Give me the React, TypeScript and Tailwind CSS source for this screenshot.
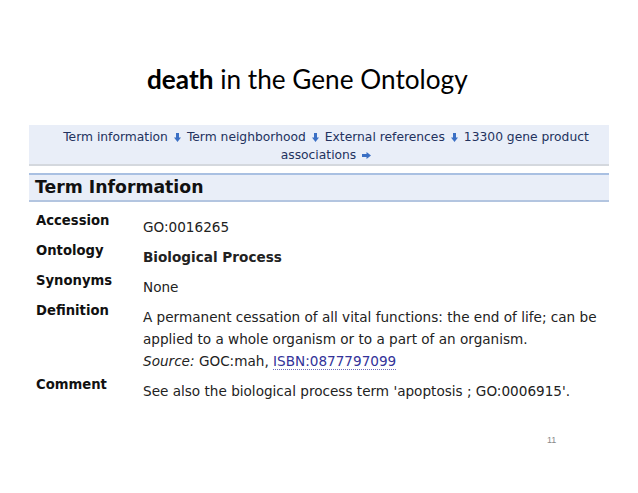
const Down = () => (
  <svg width="7" height="9" viewBox="0 0 7 9" className="mx-[6px] inline-block align-[-1px]">
    <rect x="2" y="0" width="3" height="5" fill="#3a6fc4" />
    <polygon points="0,4.5 7,4.5 3.5,9" fill="#3a6fc4" />
  </svg>
)

const Right = () => (
  <svg width="9" height="7" viewBox="0 0 9 7" className="ml-[6px] inline-block align-[0px]">
    <rect x="0" y="2" width="5" height="3" fill="#3a6fc4" />
    <polygon points="4.5,0 9,3.5 4.5,7" fill="#3a6fc4" />
  </svg>
)

type Row = { label: string; body: React.ReactNode }

const rows: Row[] = [
  { label: 'Accession', body: 'GO:0016265' },
  { label: 'Ontology', body: <b className="font-bold">Biological Process</b> },
  { label: 'Synonyms', body: 'None' },
  {
    label: 'Definition',
    body: (
      <>
        A permanent cessation of all vital functions: the end of life; can be applied to a whole organism or to a part
        of an organism.
        <br />
        <i>Source:</i> GOC:mah,{' '}
        <span className="border-b border-dotted border-[#6b6bb8] text-[#333399]">ISBN:0877797099</span>
      </>
    )
  },
  { label: 'Comment', body: "See also the biological process term 'apoptosis ; GO:0006915'." }
]

export default function App() {
  return (
    <div className="relative h-[493px] w-[638px] bg-white">
      <h1 className="pl-[147px] pt-[62px] font-['Lato',sans-serif] text-[26.2px] leading-[34px] text-black">
        <b className="font-bold">death</b> in the Gene Ontology
      </h1>

      <div className="mx-[29px] mt-[29px] w-[580px] font-['DejaVu_Sans',sans-serif]">
        <div className="border-b-2 border-[#d4d8de] bg-[#e9eef8] pt-[3px] pr-[13px] pl-[27px] text-center text-[12.3px] leading-[18px] text-[#23325e]">
          Term information
          <Down />
          Term neighborhood
          <Down />
          External references
          <Down />
          13300 gene product associations
          <Right />
        </div>

        <div className="mt-[7px] border-t-2 border-b-2 border-t-[#a9c0e2] border-b-[#b3c5e0] bg-[#e9eef8] px-[6px] text-[17.3px] leading-[25px] font-bold text-[#111]">
          Term Information
        </div>

        <div className="mt-[10px] flex flex-col">
          {rows.map((r) => (
            <div key={r.label} className="flex">
              <div className="w-[114px] shrink-0 pl-[7px] text-[13.2px] leading-[18px] font-bold text-[#111]">
                {r.label}
              </div>
              <div className="flex-1 py-[4px] text-[13.6px] leading-[22px] text-[#222]">{r.body}</div>
            </div>
          ))}
        </div>
      </div>

      <div className="absolute top-[434px] left-[547px] font-['Liberation_Sans',sans-serif] text-[9px] text-[#8a8a8a]">
        11
      </div>
    </div>
  )
}
